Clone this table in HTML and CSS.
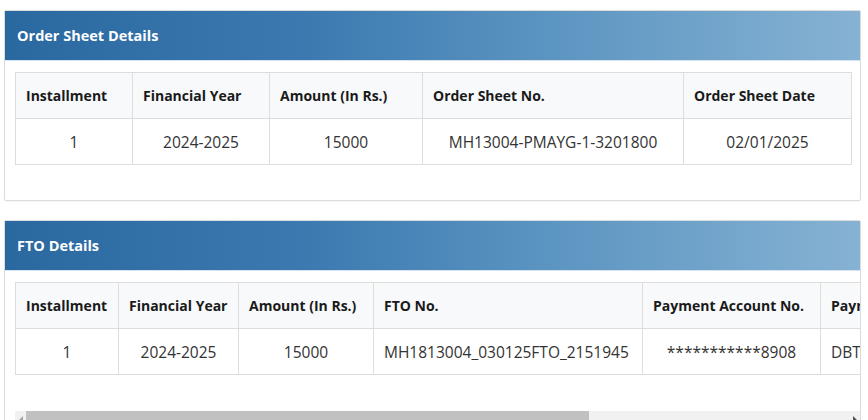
FILE: index.html
```html
<!DOCTYPE html>
<html>
<head>
<meta charset="utf-8">
<link rel="stylesheet" href="styles.css">
</head>
<body>
<div class="page">
  <div class="panel">
    <div class="panel-heading">Order Sheet Details</div>
    <div class="panel-body">
      <table class="grid grid-order">
        <thead>
          <tr>
            <th class="c1">Installment</th>
            <th class="c2">Financial Year</th>
            <th class="c3">Amount (In Rs.)</th>
            <th class="c4">Order Sheet No.</th>
            <th class="c5">Order Sheet Date</th>
          </tr>
        </thead>
        <tbody>
          <tr>
            <td>1</td>
            <td>2024-2025</td>
            <td>15000</td>
            <td>MH13004-PMAYG-1-3201800</td>
            <td>02/01/2025</td>
          </tr>
        </tbody>
      </table>
    </div>
  </div>

  <div class="panel">
    <div class="panel-heading">FTO Details</div>
    <div class="panel-body panel-body-scroll">
      <div class="table-responsive">
        <table class="grid grid-fto">
          <thead>
            <tr>
              <th class="f1">Installment</th>
              <th class="f2">Financial Year</th>
              <th class="f3">Amount (In Rs.)</th>
              <th class="f4">FTO No.</th>
              <th class="f5">Payment Account No.</th>
              <th class="f6">Payment Mode</th>
              <th class="f7">FTO Date</th>
              <th class="f8">Status</th>
            </tr>
          </thead>
          <tbody>
            <tr>
              <td>1</td>
              <td>2024-2025</td>
              <td>15000</td>
              <td class="left">MH1813004_030125FTO_2151945</td>
              <td>***********8908</td>
              <td class="left">DBT</td>
              <td>03/01/2025</td>
              <td>Processed</td>
            </tr>
          </tbody>
        </table>
      </div>
      <div class="scrollbar">
        <div class="sb-btn"><span class="arrow-left"></span></div>
        <div class="sb-track"><div class="sb-thumb"></div></div>
        <div class="sb-btn"><span class="arrow-right"></span></div>
      </div>
    </div>
  </div>
</div>
</body>
</html>
```

FILE: styles.css
```css
html, body {
  margin: 0;
  padding: 0;
  background: #ffffff;
}

body {
  font-family: "Open Sans", "Noto Sans", sans-serif;
  font-size: 14px;
  color: #333333;
}

.page {
  padding: 10px 7px 0 4px;
}

.panel {
  border: 1px solid #dcdcdc;
  border-radius: 2px;
  margin-bottom: 19px;
  background: #ffffff;
  box-shadow: 0 1px 1px rgba(0, 0, 0, 0.04);
}

.panel-heading {
  height: 50px;
  line-height: 50px;
  padding: 0 12px;
  color: #ffffff;
  font-weight: 700;
  font-size: 14.5px;
  background: linear-gradient(to right, #2a68a0 0%, #3b79b0 35%, #5d96c2 65%, #86b2d3 100%);
  border-bottom: 1px solid #d6e3ee;
  box-sizing: border-box;
}

.panel-body {
  padding: 11px 10px 35px 10px;
}

.panel-body-scroll {
  padding: 11px 0 0 10px;
}

.grid {
  border-collapse: collapse;
  background: #ffffff;
}

.grid th,
.grid td {
  border: 1px solid #dddddd;
  height: 46px;
  padding: 0 10px;
  white-space: nowrap;
  overflow: hidden;
  box-sizing: border-box;
}

.grid th {
  background: #f7f9fa;
  color: #1a1a1a;
  font-weight: 700;
  font-size: 14px;
  text-align: left;
}

.grid td {
  text-align: center;
  color: #333333;
  font-size: 15.5px;
}

.grid td.left {
  text-align: left;
}

.grid-order {
  width: 100%;
  table-layout: fixed;
}

.c1 { width: 117px; }
.c2 { width: 137px; }
.c3 { width: 153px; }
.c4 { width: 261px; }
.c5 { width: 168px; }

.table-responsive {
  overflow: hidden;
  padding-bottom: 36px;
}

.grid-fto {
  table-layout: fixed;
  width: 1238px;
}

.f1 { width: 103px; }
.f2 { width: 120px; }
.f3 { width: 135px; }
.f4 { width: 269px; }
.f5 { width: 178px; }
.f6 { width: 150px; }
.f7 { width: 140px; }
.f8 { width: 143px; }

.scrollbar {
  display: flex;
  height: 17px;
  background: #f1f1f1;
}

.sb-btn {
  width: 11px;
  flex: none;
  display: flex;
  align-items: center;
  justify-content: center;
}

.arrow-left {
  width: 0;
  height: 0;
  border-top: 4px solid transparent;
  border-bottom: 4px solid transparent;
  border-right: 4px solid #a3a3a3;
}

.arrow-right {
  width: 0;
  height: 0;
  border-top: 4px solid transparent;
  border-bottom: 4px solid transparent;
  border-left: 4px solid #505050;
}

.sb-track {
  flex: 1;
  display: flex;
}

.sb-thumb {
  width: 563px;
  background: #c1c1c1;
}
```
